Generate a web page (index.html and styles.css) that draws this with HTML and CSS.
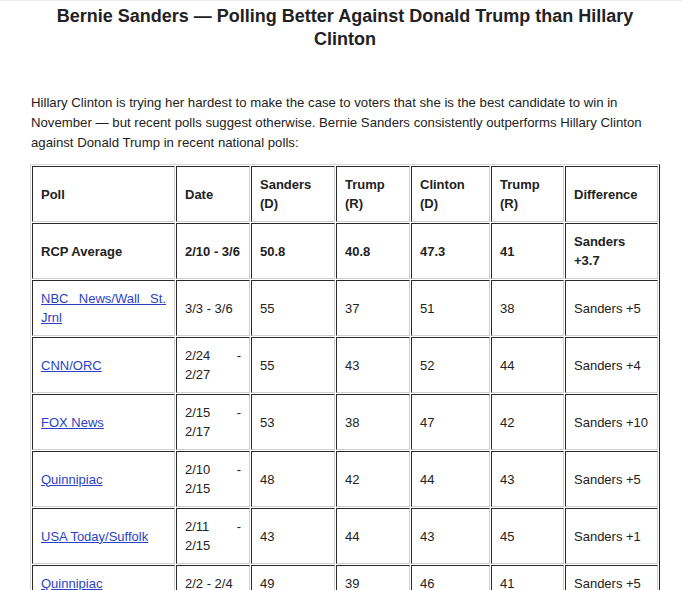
FILE: index.html
```html
<!DOCTYPE html>
<html lang="en">
<head>
<meta charset="utf-8">
<title>Bernie Sanders — Polling Better Against Donald Trump than Hillary Clinton</title>
<link rel="stylesheet" href="styles.css">
</head>
<body>
<div class="page">
  <h1 class="title">Bernie Sanders — Polling Better Against Donald Trump than Hillary Clinton</h1>
  <p class="intro">Hillary Clinton is trying her hardest to make the case to voters that she is the best candidate to win in November — but recent polls suggest otherwise. Bernie Sanders consistently outperforms Hillary Clinton against Donald Trump in recent national polls:</p>
  <table class="polls">
    <colgroup>
      <col class="c-poll"><col class="c-date"><col class="c-sd"><col class="c-tr1"><col class="c-cl"><col class="c-tr2"><col class="c-diff">
    </colgroup>
    <tbody>
      <tr class="bold">
        <td>Poll</td><td>Date</td><td>Sanders (D)</td><td>Trump (R)</td><td>Clinton (D)</td><td>Trump (R)</td><td>Difference</td>
      </tr>
      <tr class="bold">
        <td>RCP Average</td><td>2/10 - 3/6</td><td>50.8</td><td>40.8</td><td>47.3</td><td>41</td><td>Sanders +3.7</td>
      </tr>
      <tr>
        <td><a href="#">NBC News/Wall St. Jrnl</a></td><td>3/3 - 3/6</td><td>55</td><td>37</td><td>51</td><td>38</td><td>Sanders +5</td>
      </tr>
      <tr>
        <td><a href="#">CNN/ORC</a></td><td>2/24 - 2/27</td><td>55</td><td>43</td><td>52</td><td>44</td><td>Sanders +4</td>
      </tr>
      <tr>
        <td><a href="#">FOX News</a></td><td>2/15 - 2/17</td><td>53</td><td>38</td><td>47</td><td>42</td><td>Sanders +10</td>
      </tr>
      <tr>
        <td><a href="#">Quinnipiac</a></td><td>2/10 - 2/15</td><td>48</td><td>42</td><td>44</td><td>43</td><td>Sanders +5</td>
      </tr>
      <tr>
        <td><a href="#">USA Today/Suffolk</a></td><td>2/11 - 2/15</td><td>43</td><td>44</td><td>43</td><td>45</td><td>Sanders +1</td>
      </tr>
      <tr>
        <td><a href="#">Quinnipiac</a></td><td>2/2 - 2/4</td><td>49</td><td>39</td><td>46</td><td>41</td><td>Sanders +5</td>
      </tr>
    </tbody>
  </table>
</div>
</body>
</html>
```
FILE: styles.css
```css
html, body {
  margin: 0;
  padding: 0;
  background: #fff;
}
body {
  font-family: "Liberation Sans", Arial, Helvetica, sans-serif;
  color: #222;
  border-top: 1px solid #ececec;
}
.page {
  padding: 0 22px 0 30px;
}
.title {
  margin: 0;
  padding-top: 4px;
  font-size: 18px;
  line-height: 23px;
  font-weight: bold;
  text-align: center;
  color: #222;
}
.intro {
  margin: 42px 0 0 1px;
  font-size: 13.2px;
  line-height: 20px;
}
.polls {
  margin-top: 11px;
  border-collapse: separate;
  border-spacing: 1px;
  border-style: solid;
  border-width: 1px;
  border-color: #d6d6d6 #222 #222 #d6d6d6;
  table-layout: fixed;
  width: 630px;
  font-size: 13px;
  line-height: 19px;
}
.c-poll { width: 143px; }
.c-date { width: 74px; }
.c-sd { width: 84px; }
.c-tr1 { width: 74px; }
.c-cl { width: 79px; }
.c-tr2 { width: 73px; }
.c-diff { width: 93px; }
.polls td {
  border-style: solid;
  border-width: 1px;
  border-color: #2a2a2a #cfcfcf #cfcfcf #2a2a2a;
  padding: 8px;
  text-align: justify;
  vertical-align: middle;
}
.bold td {
  font-weight: bold;
}
.polls a {
  color: #2b3fc6;
  text-decoration: underline;
}
```
